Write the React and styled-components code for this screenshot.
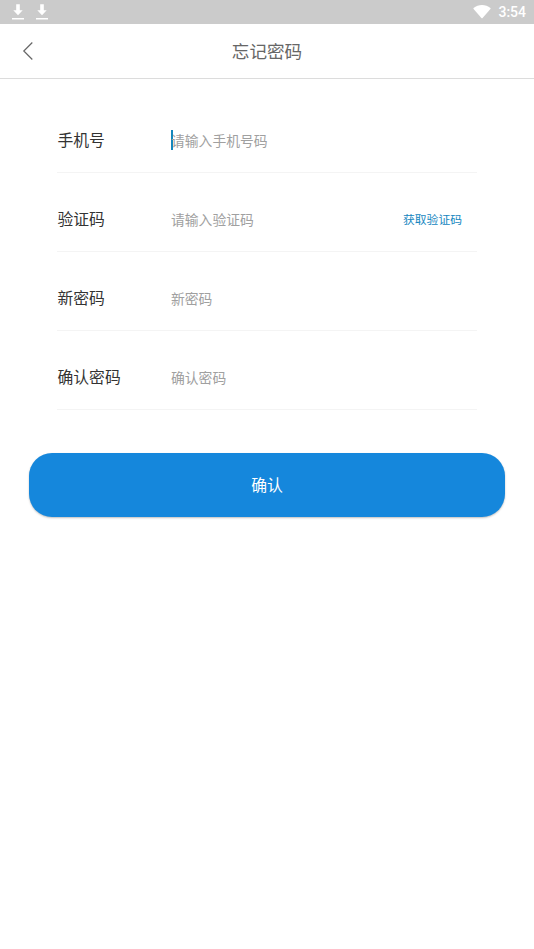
import React, { useState } from 'react';
import styled, { createGlobalStyle } from 'styled-components';

const GlobalStyle = createGlobalStyle`
    * {
        box-sizing: border-box;
    }
    body {
        margin: 0;
        background: #fff;
        font-family: Roboto, 'Noto Sans CJK SC', sans-serif;
    }
`

const Page = styled.div`
    display: flex;
    flex-direction: column;
    min-height: 949px;
    background: #fff;
`

const StatusBar = styled.div`
    display: flex;
    align-items: center;
    justify-content: space-between;
    height: 24px;
    padding: 0 8px 0 12px;
    background: #cbcbcb;
    color: #fff;
`

const StatusGroup = styled.div`
    display: flex;
    align-items: center;
    gap: ${props => props.$gap};
`

const Clock = styled.span`
    font-size: 14px;
    font-weight: 500;
    line-height: 24px;
`

const Header = styled.header`
    display: grid;
    grid-template-columns: 56px 1fr 56px;
    align-items: center;
    height: 55px;
    border-bottom: 1px solid #dcdcdc;
`

const BackButton = styled.button`
    display: flex;
    justify-content: center;
    padding: 0;
    border: 0;
    background: none;
`

const Title = styled.h1`
    margin: 0;
    padding-top: 2px;
    color: #666;
    font-size: 17.6px;
    font-weight: 400;
    line-height: 26px;
    text-align: center;
`

const Form = styled.form`
    display: flex;
    flex-direction: column;
    padding: 15px 29px 0;
`

const Row = styled.div`
    display: flex;
    align-items: center;
    height: 79px;
    margin: 0 28px;
    padding-top: 14px;
    border-bottom: 1px solid #f4f4f4;
`

const Label = styled.label`
    flex: 0 0 114px;
    padding: 2px 0 0 0.5px;
    color: #333;
    font-size: 15.8px;
    line-height: 24px;
`

const Field = styled.div`
    display: flex;
    flex: 1;
    align-items: center;
    height: 20px;
`

const Caret = styled.span`
    width: 2px;
    height: 20px;
    margin-right: -2px;
    background: #1587bd;
`

const Input = styled.input`
    width: 180px;
    padding: 2px 0 0;
    border: 0;
    outline: 0;
    background: none;
    color: #333;
    font-family: inherit;
    font-size: 13.8px;

    &::placeholder {
        color: #a0a0a0;
        opacity: 1;
    }
`

const CodeButton = styled.button`
    margin-right: 15px;
    padding: 0 0 2px;
    border: 0;
    background: none;
    color: #1486c0;
    font-family: inherit;
    font-size: 11.8px;
`

const SubmitButton = styled.button`
    height: 64px;
    margin-top: 43px;
    padding: 0 0 2px;
    border: 0;
    border-radius: 23px;
    background: #1587dc;
    box-shadow: 0 1px 2px rgba(0, 0, 0, 0.25);
    color: #fff;
    font-family: inherit;
    font-size: 15.8px;
`

const fields = [
    { name: 'phone', label: '手机号', placeholder: '请输入手机号码' },
    { name: 'code', label: '验证码', placeholder: '请输入验证码', action: '获取验证码' },
    { name: 'password', label: '新密码', placeholder: '新密码', type: 'password' },
    { name: 'confirm', label: '确认密码', placeholder: '确认密码', type: 'password' },
]

function DownloadIcon() {
    return (
        <svg width="12" height="16" viewBox="0 0 12 16" fill="#fff">
            <path d="M4.2.3h3.6v6h2.9L6 11.2 1.3 6.3h2.9z" />
            <path d="M0 14h12v1.5H0z" />
        </svg>
    )
}

function WifiIcon() {
    return (
        <svg width="18" height="14" viewBox="0 0 18 14" fill="#fff">
            <path d="M.6 3C5.2-.9 12.8-.9 17.4 3q.4.4 0 .9L9.6 13q-.6.6-1.2 0L.6 3.9q-.4-.5 0-.9z" />
        </svg>
    )
}

function FormRow({ field, active }) {
    const [value, setValue] = useState('');

    return (
        <Row>
            <Label htmlFor={field.name}>{field.label}</Label>
            <Field>
                {active && value === '' && <Caret />}
                <Input
                    id={field.name}
                    type={field.type || 'text'}
                    placeholder={field.placeholder}
                    value={value}
                    onChange={(e) => setValue(e.target.value)}
                />
            </Field>
            {field.action && <CodeButton type="button">{field.action}</CodeButton>}
        </Row>
    )
}

export default function App() {
    return (
        <Page>
            <GlobalStyle />
            <StatusBar>
                <StatusGroup $gap="12px">
                    <DownloadIcon />
                    <DownloadIcon />
                </StatusGroup>
                <StatusGroup $gap="7px">
                    <WifiIcon />
                    <Clock>3:54</Clock>
                </StatusGroup>
            </StatusBar>
            <Header>
                <BackButton aria-label="返回">
                    <svg width="12" height="20" viewBox="0 0 12 20" fill="none" stroke="#666" strokeWidth="1.2">
                        <path d="M10.3 1.5L1.8 10l8.5 8.5" />
                    </svg>
                </BackButton>
                <Title>忘记密码</Title>
            </Header>
            <Form onSubmit={(e) => e.preventDefault()}>
                {fields.map((field) => (
                    <FormRow key={field.name} field={field} active={field.name === 'phone'} />
                ))}
                <SubmitButton type="submit">确认</SubmitButton>
            </Form>
        </Page>
    )
}
